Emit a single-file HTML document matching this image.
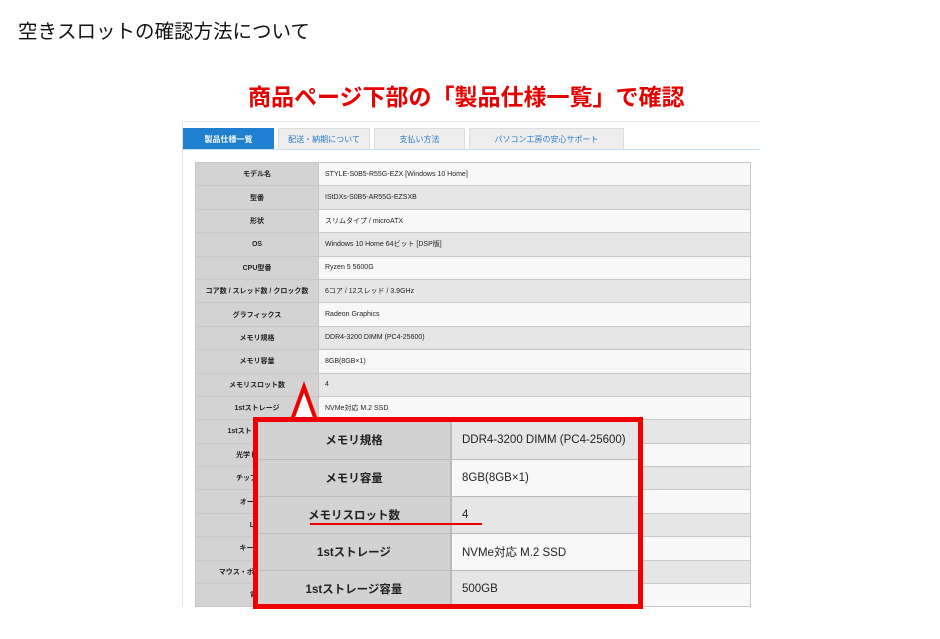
<!DOCTYPE html>
<html><head><meta charset="utf-8"><style>
*{margin:0;padding:0;box-sizing:border-box}
body{width:940px;height:639px;background:#fff;position:relative;overflow:hidden;font-family:"Liberation Sans","Noto Sans CJK JP",sans-serif}
.t1{position:absolute;left:18px;top:15px;font-size:19.5px;color:#111;white-space:nowrap;font-weight:normal}
.t2{position:absolute;left:248px;top:78px;font-size:23px;font-weight:bold;color:#e60000;white-space:nowrap}
.wrap{position:absolute;left:182px;top:121px;width:578px;height:486px;border-top:1px solid #e4e4e4;border-left:1px solid #e4e4e4}
.tab{position:absolute;top:128px;height:21px;font-size:8px;text-align:center;line-height:21px;color:#2a7ac8;background:#eee;border:1px solid #ddd;border-bottom:none}
.tab.on{background:#1f7fd0;color:#fff;font-weight:bold;border-color:#1f7fd0}
.tabline{position:absolute;left:182px;top:149px;width:578px;height:1px;background:#1f7fd0;opacity:.25}
table{border-collapse:collapse;position:absolute}
.main{left:195px;top:162px;width:556px}
.main td{height:23.4px;font-size:7px;border:1px solid #c8c8c8;padding:0 6px;color:#222}
.main td.l{width:123px;background:#d3d3d3;text-align:center;font-weight:bold}
.main tr:nth-child(odd) td.v{background:#f8f8f8}
.main tr:nth-child(even) td.v{background:#e6e6e6}
.box{position:absolute;left:253px;top:417px;width:390px;height:192px;border:5px solid #ee0000;background:#fff;overflow:hidden}
.box table{left:0;top:0;width:380px}
.box td{height:37.2px;font-size:11.5px;border-bottom:1px solid #bbb;color:#222}
.box td.l{width:193px;background:#d2d2d2;text-align:center;font-weight:bold;border-right:2px solid #bbb}
.box td.v{padding-left:10px;white-space:nowrap}
.box tr:nth-child(odd) td.v{background:#e6e6e6}
.box tr:nth-child(even) td.v{background:#f8f8f8}
</style></head><body>
<div class="t1">空きスロットの確認方法について</div>
<div class="t2">商品ページ下部の「製品仕様一覧」で確認</div>
<div class="wrap"></div>
<div class="tab on" style="left:183px;width:91px">製品仕様一覧</div>
<div class="tab" style="left:278px;width:92px">配送・納期について</div>
<div class="tab" style="left:374px;width:91px">支払い方法</div>
<div class="tab" style="left:469px;width:155px">パソコン工房の安心サポート</div>
<div class="tabline"></div>
<table class="main">
<tr><td class="l">モデル名</td><td class="v">STYLE-S0B5-R55G-EZX [Windows 10 Home]</td></tr>
<tr><td class="l">型番</td><td class="v">IStDXs-S0B5-AR55G-EZSXB</td></tr>
<tr><td class="l">形状</td><td class="v">スリムタイプ / microATX</td></tr>
<tr><td class="l">OS</td><td class="v">Windows 10 Home 64ビット [DSP版]</td></tr>
<tr><td class="l">CPU型番</td><td class="v">Ryzen 5 5600G</td></tr>
<tr><td class="l">コア数 / スレッド数 / クロック数</td><td class="v">6コア / 12スレッド / 3.9GHz</td></tr>
<tr><td class="l">グラフィックス</td><td class="v">Radeon Graphics</td></tr>
<tr><td class="l">メモリ規格</td><td class="v">DDR4-3200 DIMM (PC4-25600)</td></tr>
<tr><td class="l">メモリ容量</td><td class="v">8GB(8GB×1)</td></tr>
<tr><td class="l">メモリスロット数</td><td class="v">4</td></tr>
<tr><td class="l">1stストレージ</td><td class="v">NVMe対応 M.2 SSD</td></tr>
<tr><td class="l">1stストレージ容量</td><td class="v">500GB</td></tr>
<tr><td class="l">光学ドライブ</td><td class="v"></td></tr>
<tr><td class="l">チップセット</td><td class="v"></td></tr>
<tr><td class="l">オーディオ</td><td class="v"></td></tr>
<tr><td class="l">LAN</td><td class="v"></td></tr>
<tr><td class="l">キーボード</td><td class="v"></td></tr>
<tr><td class="l">マウス・ポインティング</td><td class="v"></td></tr>
<tr><td class="l">電源</td><td class="v"></td></tr>
</table>
<div style="position:absolute;left:0;top:608px;width:940px;height:31px;background:#fff"></div>
<svg style="position:absolute;left:0;top:0" width="940" height="639">
<polygon points="292,420 304,387 316,420" fill="#fff"/>
<polyline points="292,420 304,387 316,420" fill="none" stroke="#ee0000" stroke-width="4" stroke-linejoin="miter"/>
</svg>
<div class="box">
<table>
<tr><td class="l">メモリ規格</td><td class="v">DDR4-3200 DIMM (PC4-25600)</td></tr>
<tr><td class="l">メモリ容量</td><td class="v">8GB(8GB×1)</td></tr>
<tr><td class="l">メモリスロット数</td><td class="v">4</td></tr>
<tr><td class="l">1stストレージ</td><td class="v">NVMe対応 M.2 SSD</td></tr>
<tr><td class="l">1stストレージ容量</td><td class="v">500GB</td></tr>
</table>
<div style="position:absolute;left:52px;top:101px;width:172px;height:2px;background:#ee0000"></div>
</div>
</body></html>
